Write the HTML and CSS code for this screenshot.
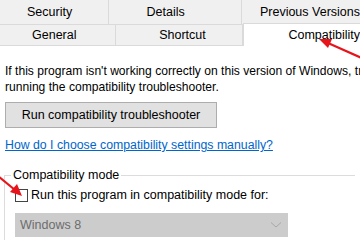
FILE: index.html
```html
<!DOCTYPE html>
<html lang="en">
<head>
    <meta charset="UTF-8">
    <title>Properties - Compatibility</title>
    <link rel="stylesheet" href="styles.css">
</head>
<body>
    <div class="dialog">
        <div class="tab-row back">
            <div class="tab t-security">Security</div>
            <div class="tab t-details">Details</div>
            <div class="tab t-prev">Previous Versions</div>
        </div>
        <div class="tab-row front">
            <div class="tab t-general">General</div>
            <div class="tab t-shortcut">Shortcut</div>
            <div class="tab t-compat active">Compatibility</div>
        </div>

        <div class="page">
            <p class="intro">If this program isn't working correctly on this version of Windows, try running the compatibility troubleshooter.</p>
            <button type="button" class="btn">Run compatibility troubleshooter</button>
            <a class="link" href="#">How do I choose compatibility settings manually?</a>

            <fieldset class="group">
                <legend>Compatibility mode</legend>
                <label class="check">
                    <span class="box"></span>
                    Run this program in compatibility mode for:
                </label>
                <div class="select">
                    <span>Windows 8</span>
                    <svg width="12" height="8" viewBox="0 0 12 8"><path d="M1 1.5 L6 6 L11 1.5" fill="none" stroke="#a8a8a8" stroke-width="1"/></svg>
                </div>
            </fieldset>
        </div>

        <svg class="arrows" width="360" height="240" viewBox="0 0 360 240">
            <line x1="364" y1="59" x2="328" y2="43" stroke="#e8141b" stroke-width="2.2"/>
            <polygon points="319,39 332,39 328,48" fill="#e8141b"/>
            <line x1="-2" y1="176" x2="15" y2="190" stroke="#e8141b" stroke-width="2.2"/>
            <polygon points="22,196 10,192 17,184" fill="#e8141b"/>
        </svg>
    </div>
</body>
</html>
```

FILE: styles.css
```css
body {
    margin: 0;
    padding: 0;
    background: #ffffff;
    font-family: "Liberation Sans", Arial, sans-serif;
    font-size: 12px;
    color: #000000;
}

.dialog {
    position: relative;
    width: 360px;
    height: 240px;
    overflow: hidden;
}

.tab-row {
    display: flex;
    background: #f0f0f0;
}

.tab-row.back {
    height: 24px;
    border-bottom: 1px solid #dadada;
}

.tab-row.front {
    height: 20px;
    border-bottom: 1px solid #dadada;
}

.tab {
    display: flex;
    align-items: center;
    box-sizing: border-box;
    border-right: 1px solid #dadada;
    color: #000000;
    font-size: 12.5px;
    white-space: nowrap;
}

.t-security { width: 110px; padding-left: 27px; }
.t-details { width: 135px; padding-left: 38px; }
.t-prev { flex: 1; border-right: none; padding-left: 18px; }

.t-general { width: 117px; padding-left: 32px; }
.t-shortcut { width: 128px; padding-left: 43px; }
.t-compat {
    flex: 1;
    border-right: none;
    padding-left: 44px;
}

.tab.active {
    background: #ffffff;
    margin-top: -2px;
    margin-bottom: -1px;
    border-left: 1px solid #dadada;
    border-top: 1px solid #dadada;
}

.page {
    padding: 17px 5px 0 5px;
}

.intro {
    margin: 0;
    width: 380px;
    line-height: 16px;
    font-size: 12.1px;
}

.btn {
    display: block;
    margin-top: 7px;
    width: 212px;
    height: 26px;
    background: #e1e1e1;
    border: 1px solid #adadad;
    font-family: inherit;
    font-size: 12.5px;
    color: #000000;
    padding: 0;
}

.link {
    display: block;
    margin-top: 10px;
    color: #0066cc;
    font-size: 12.3px;
    text-decoration: underline;
}

.group {
    margin: 16px 0 0 -1px;
    padding: 6px 10px 0 10px;
    border: 1px solid #dcdcdc;
    border-right: none;
    border-bottom: none;
    height: 80px;
}

.group legend {
    padding: 0 2px;
    margin-left: -4px;
    font-size: 12.5px;
}

.check {
    display: flex;
    align-items: center;
    gap: 3px;
    font-size: 12.5px;
}

.box {
    width: 11px;
    height: 11px;
    border: 1px solid #444444;
    background: #ffffff;
}

.select {
    display: flex;
    align-items: center;
    justify-content: space-between;
    margin-top: 11px;
    width: 273px;
    height: 24px;
    padding: 0 6px 0 5px;
    box-sizing: border-box;
    background: #cccccc;
    color: #6d6d6d;
    font-size: 12.5px;
}

.arrows {
    position: absolute;
    left: 0;
    top: 0;
    pointer-events: none;
}
```
